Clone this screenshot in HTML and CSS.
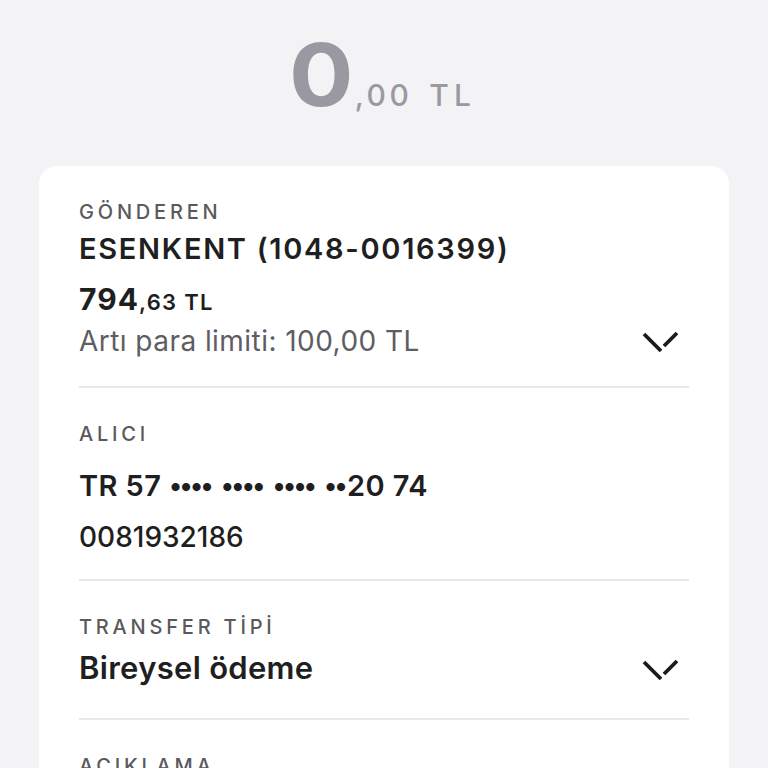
FILE: index.html
```html
<!DOCTYPE html>
<html lang="tr">
<head>
    <meta charset="UTF-8">
    <meta name="viewport" content="width=device-width, initial-scale=1.0">
    <title>Para Transferi</title>
    <link rel="stylesheet" href="styles.css">
</head>
<body>
    <div class="amount">
        <span class="amount-int">0</span><span class="amount-dec">,00</span><span class="amount-cur">TL</span>
    </div>

    <div class="card">
        <div class="section sender">
            <div class="label">GÖNDEREN</div>
            <div class="row">
                <div class="info">
                    <div class="title">ESENKENT (1048-0016399)</div>
                    <div class="balance"><b>794</b>,63 TL</div>
                    <div class="sub">Artı para limiti: 100,00 TL</div>
                </div>
                <svg class="chevron" width="40" height="25" viewBox="0 0 40 25">
                    <path d="M4 4 L21 21 M24 16 L37 3" stroke="#1c1c1e" stroke-width="3.8" fill="none"/>
                </svg>
            </div>
        </div>

        <div class="section receiver">
            <div class="label">ALICI</div>
            <div class="title iban">TR 57 <span class="dots">••••</span> <span class="dots">••••</span> <span class="dots">••••</span> <span class="dots">••</span>20 74</div>
            <div class="account">0081932186</div>
        </div>

        <div class="section">
            <div class="label">TRANSFER TİPİ</div>
            <div class="row center">
                <div class="title big">Bireysel ödeme</div>
                <svg class="chevron" width="40" height="25" viewBox="0 0 40 25">
                    <path d="M4 4 L21 21 M24 16 L37 3" stroke="#1c1c1e" stroke-width="3.8" fill="none"/>
                </svg>
            </div>
        </div>

        <div class="section">
            <div class="label">AÇIKLAMA</div>
        </div>
    </div>
</body>
</html>
```

FILE: styles.css
```css
body {
    margin: 0;
    background-color: #f3f3f6;
    font-family: Inter, "Noto Sans", sans-serif;
    color: #1f1f22;
    overflow: hidden;
    height: 768px;
}
.amount {
    display: flex;
    justify-content: center;
    align-items: baseline;
    padding-top: 31px;
    color: #9a99a1;
}
.amount-int {
    font-size: 87px;
    font-weight: 700;
    line-height: 87px;
    display: inline-block;
    transform: scaleX(1.1);
    margin-right: 2px;
}
.amount-dec {
    font-size: 30px;
    font-weight: 500;
    letter-spacing: 3.5px;
    margin-left: 2px;
}
.amount-cur {
    font-size: 30px;
    font-weight: 500;
    letter-spacing: 5px;
    margin-left: 17px;
}
.card {
    background: #fff;
    margin: 48px 39px 0 39px;
    border-radius: 18px;
    padding: 0 40px;
}
.section {
    border-bottom: 2px solid #e9e9ed;
    padding: 34px 0 30px;
}
.section.sender {
    padding-bottom: 29px;
}
.section.receiver {
    padding-bottom: 26px;
}
.label {
    font-size: 20px;
    letter-spacing: 3.8px;
    color: #5a595e;
    font-weight: 500;
    line-height: 24px;
}
.row {
    display: flex;
    justify-content: space-between;
    align-items: flex-end;
}
.row.center {
    align-items: center;
    margin-top: 9px;
}
.info {
    flex: 1;
}
.title {
    font-size: 29px;
    font-weight: 600;
    line-height: 34px;
    margin-top: 8px;
    letter-spacing: 1.7px;
}
.title.big {
    font-size: 31px;
    line-height: 40px;
    margin-top: 0;
    letter-spacing: 0.3px;
}
.balance {
    font-size: 22px;
    font-weight: 600;
    margin-top: 16px;
    line-height: 34px;
    letter-spacing: 1.3px;
}
.balance b {
    font-size: 30px;
    font-weight: 700;
    letter-spacing: 1px;
}
.sub {
    font-size: 28px;
    font-weight: 400;
    color: #5e5d63;
    line-height: 32px;
    margin-top: 6px;
    letter-spacing: 0.45px;
}
.chevron {
    margin-right: 9px;
    margin-bottom: 2px;
}
.row.center .chevron {
    margin: 4px 9px 0 0;
}
.iban {
    margin-top: 23px;
    letter-spacing: 0.4px;
}
.dots {
    font-size: 26px;
    letter-spacing: -2.6px;
    margin-right: 2px;
    vertical-align: 1px;
}
.account {
    font-size: 28px;
    font-weight: 500;
    margin-top: 18px;
    line-height: 32px;
}
```
